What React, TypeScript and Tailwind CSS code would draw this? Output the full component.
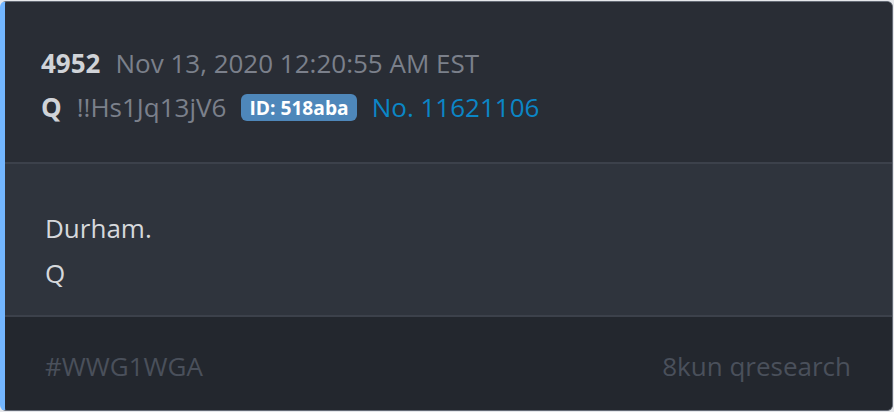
export default function App() {
  const font = { fontFamily: '"Open Sans", "Noto Sans", sans-serif' };
  return (
    <div className="w-[894px] h-[412px] bg-[#e5e7eb] pt-[1px]" style={font}>
      <div className="w-[893px] h-[410px] flex flex-col overflow-hidden rounded-[6px] border border-[#646a75] border-l-[5px] border-l-[#73b6ff] bg-[#282c34]">
        {/* header */}
        <div className="pt-[39px] pb-[33px] pl-[36px] bg-[#292d35] text-[26px]">
          <div className="flex items-center gap-[15px] h-[44px] leading-[44px]">
            <span className="font-bold text-[#d0d3d8]">4952</span>
            <span className="text-[#7b808b]">Nov 13, 2020 12:20:55 AM EST</span>
          </div>
          <div className="flex items-center gap-[15px] h-[44px] leading-[44px]">
            <span className="font-bold text-[#d0d3d8]">Q</span>
            <span className="text-[#7b808b]">!!Hs1Jq13jV6</span>
            <span className="h-[27px] px-[8px] rounded-[6px] bg-[#4e87ba] text-white font-bold text-[19.2px] leading-[27px]">
              ID: 518aba
            </span>
            <span className="text-[#0b86c6]">No. 11621106</span>
          </div>
        </div>
        <div className="h-[2px] bg-[#3c414b]" />
        {/* body */}
        <div className="pt-[42px] pb-[19px] pl-[40px] bg-[#2f343d] text-[26px] leading-[45px] text-[#d6d8dc]">
          <p>Durham.</p>
          <p>Q</p>
        </div>
        <div className="h-[2px] bg-[#3c414b]" />
        {/* footer */}
        <div className="flex-1 flex justify-between pt-[30px] pl-[40px] pr-[41px] bg-[#23272e] text-[26px] leading-[38px] text-[#4a505b]">
          <span>#WWG1WGA</span>
          <span>8kun qresearch</span>
        </div>
      </div>
    </div>
  );
}
